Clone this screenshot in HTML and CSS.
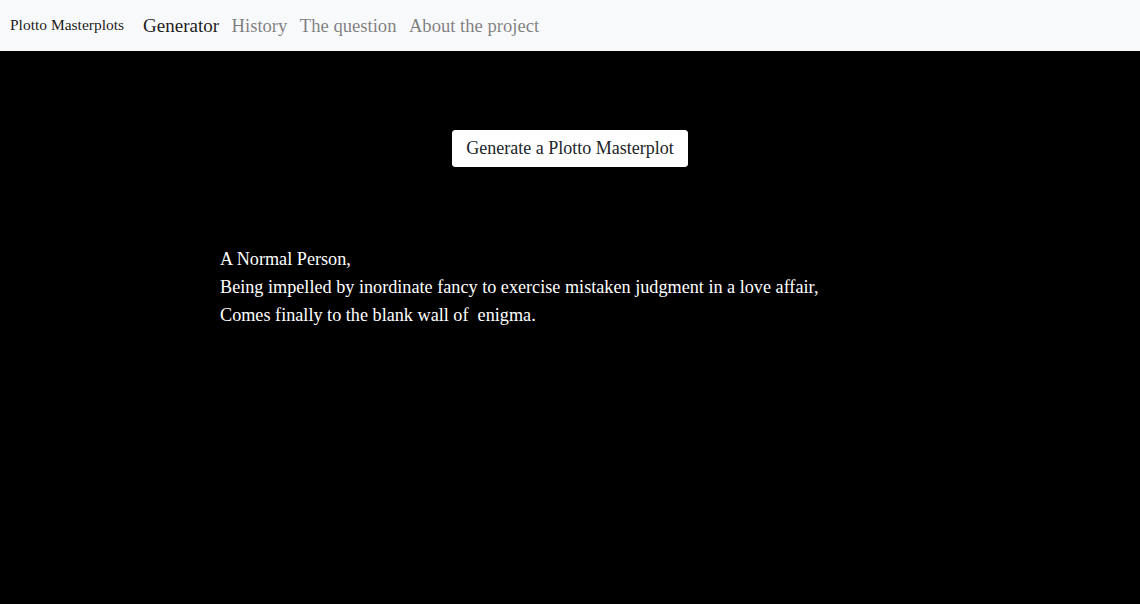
FILE: index.html
```html
<!DOCTYPE html>
<html lang="en">
<head>
<meta charset="utf-8">
<title>Plotto Masterplots</title>
<link rel="stylesheet" href="styles.css">
</head>
<body>
<nav class="navbar">
  <a class="brand" href="#">Plotto Masterplots</a>
  <ul class="nav">
    <li><a class="nav-link active" href="#">Generator</a></li>
    <li><a class="nav-link" href="#">History</a></li>
    <li><a class="nav-link" href="#">The question</a></li>
    <li><a class="nav-link" href="#">About the project</a></li>
  </ul>
</nav>
<main class="main">
  <div class="actions">
    <button class="btn" type="button">Generate a Plotto Masterplot</button>
  </div>
  <div class="plot">
    <p class="line">A Normal Person,</p>
    <p class="line">Being impelled by inordinate fancy to exercise mistaken judgment in a love affair,</p>
    <p class="line">Comes finally to the blank wall of&nbsp; enigma.</p>
  </div>
</main>
</body>
</html>
```

FILE: styles.css
```css
html, body {
  margin: 0;
  padding: 0;
  height: 100%;
}
body {
  background: #000;
  font-family: "Liberation Serif", "Times New Roman", serif;
  color: #fff;
}
.navbar {
  height: 51px;
  box-sizing: border-box;
  background: #f8f9fa;
  display: flex;
  align-items: center;
  padding: 0 10px;
}
.brand {
  font-size: 15.5px;
  color: rgba(0,0,0,0.9);
  text-decoration: none;
  margin-right: 19px;
  padding-bottom: 2px;
}
.nav {
  display: flex;
  list-style: none;
  margin: 0;
  padding: 0;
  gap: 12.5px;
}
.nav-link {
  font-size: 18.6px;
  color: rgba(0,0,0,0.5);
  text-decoration: none;
}
.nav-link.active {
  font-size: 19px;
  color: rgba(0,0,0,0.9);
}
.main {
  display: flex;
  flex-direction: column;
}
.actions {
  display: flex;
  justify-content: center;
  padding-top: 79px;
}
.btn {
  background: #fff;
  border: 1px solid #fff;
  border-radius: 3px;
  font-family: inherit;
  font-size: 18px;
  color: #212529;
  height: 37px;
  padding: 0 13px;
  cursor: pointer;
}
.plot {
  padding: 78px 0 0 220px;
}
.line {
  margin: 0;
  font-size: 18.2px;
  line-height: 28px;
}
```
